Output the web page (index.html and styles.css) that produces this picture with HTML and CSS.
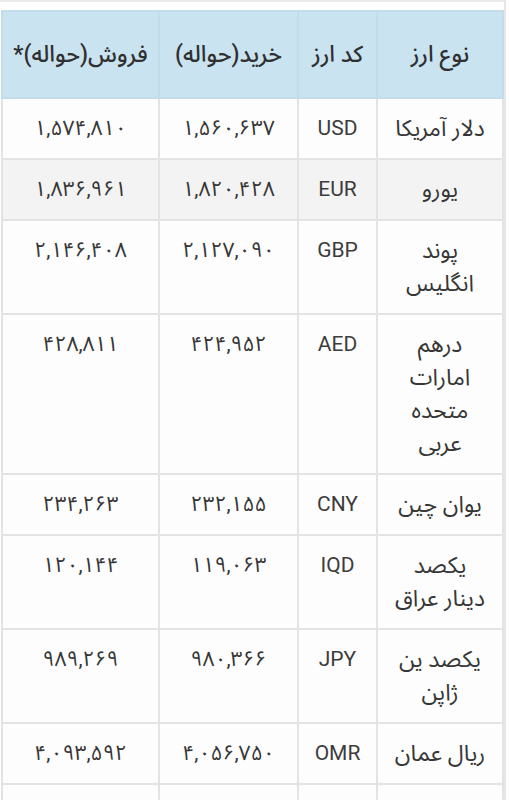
FILE: index.html
```html
<!DOCTYPE html>
<html lang="fa" dir="rtl">
<head>
<meta charset="utf-8">
<title>نرخ ارز</title>
<link rel="stylesheet" href="styles.css">
</head>
<body>
<div class="wrap">
<table class="rates">
<colgroup>
<col class="c-name"><col class="c-code"><col class="c-buy"><col class="c-sell">
</colgroup>
<thead>
<tr><th>نوع ارز</th><th>کد ارز</th><th>خرید(حواله)</th><th>فروش(حواله)*</th></tr>
</thead>
<tbody>
<tr><td>دلار آمریکا</td><td class="code">USD</td><td class="num">۱,۵۶۰,۶۳۷</td><td class="num">۱,۵۷۴,۸۱۰</td></tr>
<tr class="alt"><td>یورو</td><td class="code">EUR</td><td class="num">۱,۸۲۰,۴۲۸</td><td class="num">۱,۸۳۶,۹۶۱</td></tr>
<tr><td>پوند<br>انگلیس</td><td class="code">GBP</td><td class="num">۲,۱۲۷,۰۹۰</td><td class="num">۲,۱۴۶,۴۰۸</td></tr>
<tr><td>درهم<br>امارات<br>متحده<br>عربی</td><td class="code">AED</td><td class="num">۴۲۴,۹۵۲</td><td class="num">۴۲۸,۸۱۱</td></tr>
<tr><td>یوان چین</td><td class="code">CNY</td><td class="num">۲۳۲,۱۵۵</td><td class="num">۲۳۴,۲۶۳</td></tr>
<tr><td>یکصد<br>دینار عراق</td><td class="code">IQD</td><td class="num">۱۱۹,۰۶۳</td><td class="num">۱۲۰,۱۴۴</td></tr>
<tr><td>یکصد ین<br>ژاپن</td><td class="code">JPY</td><td class="num">۹۸۰,۳۶۶</td><td class="num">۹۸۹,۲۶۹</td></tr>
<tr><td>ریال عمان</td><td class="code">OMR</td><td class="num">۴,۰۵۶,۷۵۰</td><td class="num">۴,۰۹۳,۵۹۲</td></tr>
<tr class="empty"><td>&nbsp;</td><td class="code">&nbsp;</td><td class="num">&nbsp;</td><td class="num">&nbsp;</td></tr>
</tbody>
</table>
</div>
</body>
</html>
```
FILE: styles.css
```css
html, body {
  margin: 0;
  padding: 0;
  background: #ffffff;
}
body {
  font-family: "Roboto", "Noto Sans Arabic", "DejaVu Sans", sans-serif;
  color: #363636;
}
.wrap {
  width: 506px;
  box-sizing: border-box;
  border-top: 2px solid #e9e9e9;
  border-right: 2px solid #e6e6e6;
  padding: 8px 0 0 3px;
  margin-left: auto;
  margin-right: 4px;
}
.rates {
  width: 501px;
  border-collapse: collapse;
  table-layout: fixed;
  font-size: 23px;
  line-height: 33px;
}
.c-name { width: 126px; }
.c-code { width: 79px; }
.c-buy { width: 139px; }
.c-sell { width: 157px; }
.rates th,
.rates td {
  border: 2px solid #e3e3e3;
  text-align: center;
  vertical-align: top;
  padding: 13px 4px 13px;
}
.rates thead th {
  background: #c9e3f0;
  border-color: #c3dcea;
  font-weight: 500;
  font-size: 23px;
  padding: 26px 2px 26px;
  vertical-align: middle;
  color: #303030;
}
.rates tbody tr {
  background: #fdfdfd;
}
.rates tbody tr.alt {
  background: #f3f3f3;
}
.rates td.code {
  font-size: 21px;
  color: #3c3c3c;
}
.rates td.num {
  font-size: 21px;
}
```
